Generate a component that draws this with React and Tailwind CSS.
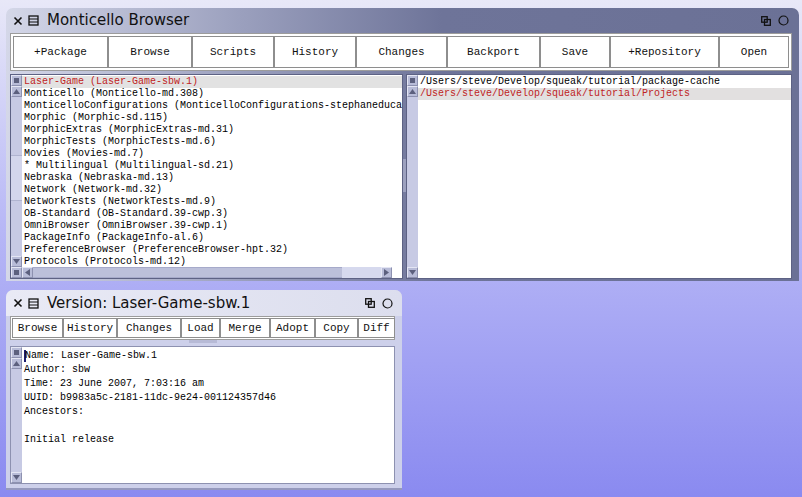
import React from 'react';

const packages = [
  'Laser-Game (Laser-Game-sbw.1)',
  'Monticello (Monticello-md.308)',
  'MonticelloConfigurations (MonticelloConfigurations-stephaneducasse.47)',
  'Morphic (Morphic-sd.115)',
  'MorphicExtras (MorphicExtras-md.31)',
  'MorphicTests (MorphicTests-md.6)',
  'Movies (Movies-md.7)',
  '* Multilingual (Multilingual-sd.21)',
  'Nebraska (Nebraska-md.13)',
  'Network (Network-md.32)',
  'NetworkTests (NetworkTests-md.9)',
  'OB-Standard (OB-Standard.39-cwp.3)',
  'OmniBrowser (OmniBrowser.39-cwp.1)',
  'PackageInfo (PackageInfo-al.6)',
  'PreferenceBrowser (PreferenceBrowser-hpt.32)',
  'Protocols (Protocols-md.12)',
];

const repos = [
  '/Users/steve/Develop/squeak/tutorial/package-cache',
  '/Users/steve/Develop/squeak/tutorial/Projects',
];

const mainButtons = [
  ['+Package', 'w-[95px]'],
  ['Browse', 'w-[84px]'],
  ['Scripts', 'w-[82px]'],
  ['History', 'w-[82px]'],
  ['Changes', 'w-[91px]'],
  ['Backport', 'w-[93px]'],
  ['Save', 'w-[70px]'],
  ['+Repository', 'w-[109px]'],
  ['Open', 'w-[70px]'],
];

const versionButtons = [
  ['Browse', 'w-[51px]'],
  ['History', 'w-[54px]'],
  ['Changes', 'w-[64px]'],
  ['Load', 'w-[39px]'],
  ['Merge', 'w-[50px]'],
  ['Adopt', 'w-[45px]'],
  ['Copy', 'w-[43px]'],
  ['Diff', 'w-[37px]'],
];

const mono = "font-['Liberation_Mono',monospace]";

function CloseIcon() {
  return (
    <svg width="10" height="10" viewBox="0 0 10 10">
      <path d="M1.5 1.5 L8.5 8.5 M8.5 1.5 L1.5 8.5" stroke="#111" strokeWidth="1.6" />
    </svg>
  );
}

function MenuIcon() {
  return (
    <svg width="11" height="11" viewBox="0 0 11 11">
      <rect x="1" y="1" width="9" height="9" fill="none" stroke="#111" strokeWidth="1.3" />
      <path d="M1 4 H10 M1 7 H10" stroke="#111" strokeWidth="1.2" />
    </svg>
  );
}

function CollapseIcon() {
  return (
    <svg width="10" height="10" viewBox="0 0 10 10">
      <rect x="0.7" y="0.7" width="5.5" height="5.5" fill="none" stroke="#111" strokeWidth="1.3" />
      <rect x="3.5" y="3.5" width="5.8" height="5.8" fill="none" stroke="#111" strokeWidth="1.3" />
    </svg>
  );
}

function CircleIcon() {
  return (
    <svg width="11" height="11" viewBox="0 0 11 11">
      <circle cx="5.5" cy="5.5" r="4.5" fill="none" stroke="#111" strokeWidth="1.2" />
    </svg>
  );
}

function TitleBar({ title, bg, h, iconsRight }) {
  return (
    <div className={`flex items-center ${h} ${bg} pl-[7px] ${iconsRight}`}>
      <CloseIcon />
      <div className="ml-[5px]"><MenuIcon /></div>
      <div className="ml-[8px] font-['DejaVu_Sans',sans-serif] text-[15px] leading-none text-[#111]">{title}</div>
      <div className="ml-auto flex items-center gap-[7px]">
        <CollapseIcon />
        <CircleIcon />
      </div>
    </div>
  );
}

function SBtn({ kind }) {
  return (
    <div className="w-[11px] h-[11px] shrink-0 bg-[#b8bcd8] border border-[#e4e6f4] border-r-[#8d91b0] border-b-[#8d91b0] flex items-center justify-center">
      {kind === 'menu' && <div className="w-[5px] h-[5px] bg-[#5c607e]" />}
      {kind === 'up' && (
        <svg width="7" height="5"><polygon points="0,5 3.5,0 7,5" fill="#5c607e" /></svg>
      )}
      {kind === 'down' && (
        <svg width="7" height="5"><polygon points="0,0 3.5,5 7,0" fill="#5c607e" /></svg>
      )}
      {kind === 'left' && (
        <svg width="5" height="7"><polygon points="5,0 0,3.5 5,7" fill="#5c607e" /></svg>
      )}
      {kind === 'right' && (
        <svg width="5" height="7"><polygon points="0,0 5,3.5 0,7" fill="#5c607e" /></svg>
      )}
    </div>
  );
}

function VScroll({ thumb }) {
  return (
    <div className="w-[11px] shrink-0 flex flex-col bg-[#c7cae4]">
      <SBtn kind="menu" />
      <SBtn kind="up" />
      <div className="flex-1 flex flex-col">
        {thumb && <div className="mt-[58px] h-[46px] bg-[#d3d6ec] border-y border-[#b0b4d0]" />}
      </div>
      <SBtn kind="down" />
    </div>
  );
}

function Button({ label, w, h }) {
  return (
    <div className={`${w} ${h} shrink-0 border border-[#8e8e8e] bg-white flex items-center justify-center ${mono} text-[11px] text-[#111]`}>
      {label}
    </div>
  );
}

function MainWindow() {
  return (
    <div className="ml-[6px] mt-[8px] w-[793px] h-[273px] rounded-t-[7px] bg-[linear-gradient(to_right,#d4d7e8_0%,#9a9fbd_30%,#6e7499_55%,#6b7196_100%)] flex flex-col overflow-hidden">
      <TitleBar title="Monticello Browser" h="h-[25px]" bg="" iconsRight="pr-[10px]" />
      <div className="pl-[4px] pr-[7px] flex flex-col flex-1">
        <div className="flex border border-[#9c9c9c] bg-white p-[2px]">
          {mainButtons.map(([label, w]) => (
            <Button key={label} label={label} w={w} h="h-[32px]" />
          ))}
        </div>
        <div className="mt-[3px] flex h-[205px]">
          <div className="w-[393px] flex flex-col bg-white border border-[#5d6284]">
            <div className="flex flex-1 min-h-0">
              <VScroll thumb />
              <div className={`flex-1 overflow-hidden pt-px ${mono} text-[10px] leading-[12px] text-black`}>
                {packages.map((p, i) => (
                  <div
                    key={p}
                    className={i === 0 ? 'h-[12px] pl-[2px] whitespace-nowrap bg-[#e2e2e2] text-[#c02424]' : 'h-[12px] pl-[2px] whitespace-nowrap'}
                  >
                    {p}
                  </div>
                ))}
              </div>
            </div>
            <div className="h-[11px] flex bg-[#c7cae4]">
              <SBtn kind="menu" />
              <SBtn kind="left" />
              <div className="w-[309px] bg-[#bcc0da] border-y border-[#a6aaca]" />
              <div className="flex-1 bg-[#d6d9ee]" />
              <SBtn kind="right" />
              <div className="w-[10px] bg-white" />
            </div>
          </div>
          <div className="w-[3px] flex flex-col">
            <div className="mt-[85px] h-[33px] bg-[#9da1bf]" />
          </div>
          <div className="flex-1 flex bg-white border border-[#5d6284]">
            <VScroll />
            <div className={`flex-1 overflow-hidden pt-px ${mono} text-[10px] leading-[12px] text-black`}>
              {repos.map((r, i) => (
                <div
                  key={r}
                  className={i === 1 ? 'h-[12px] pl-[2px] whitespace-nowrap bg-[#e2e0e0] text-[#c02424]' : 'h-[12px] pl-[2px] whitespace-nowrap'}
                >
                  {r}
                </div>
              ))}
            </div>
          </div>
        </div>
      </div>
    </div>
  );
}

function VersionWindow() {
  const lines = [
    'Name: Laser-Game-sbw.1',
    'Author: sbw',
    'Time: 23 June 2007, 7:03:16 am',
    'UUID: b9983a5c-2181-11dc-9e24-001124357d46',
    'Ancestors:',
    '',
    'Initial release',
  ];
  return (
    <div className="ml-[6px] mt-[9px] w-[396px] h-[200px] rounded-t-[7px] bg-[#cdd0ea] flex flex-col overflow-hidden border-b-2 border-[#9599bd]">
      <TitleBar
        title="Version: Laser-Game-sbw.1"
        h="h-[26px]"
        bg="bg-[linear-gradient(to_right,#e9eaf5,#dcdeee)]"
        iconsRight="pr-[9px]"
      />
      <div className="pl-[4px] pr-[7px] flex flex-col flex-1">
        <div className="flex border border-[#9c9c9c] bg-white px-[1px] py-px">
          {versionButtons.map(([label, w]) => (
            <Button key={label} label={label} w={w} h="h-[20px]" />
          ))}
        </div>
        <div className="h-[6px] flex justify-center">
          <div className="w-[28px] h-[3px] bg-[#b7bad6]" />
        </div>
        <div className="h-[138px] flex bg-white border border-[#8d91b0]">
          <VScroll />
          <div className={`flex-1 pt-[2px] pl-[2px] ${mono} text-[10px] leading-[14px] text-black`}>
            {lines.map((l, i) => (
              <div key={i} className="h-[14px] whitespace-nowrap flex items-center">
                {i === 0 && <span className="inline-block w-[2px] h-[12px] bg-[#1d1d70] mr-[-1px]" />}
                {l}
              </div>
            ))}
          </div>
        </div>
      </div>
    </div>
  );
}

export default function App() {
  return (
    <div className="w-[802px] h-[497px] overflow-hidden bg-[linear-gradient(to_bottom,#e8e8f8_0%,#b8b8f6_45%,#8a8af0_100%)] flex flex-col">
      <MainWindow />
      <VersionWindow />
    </div>
  );
}
